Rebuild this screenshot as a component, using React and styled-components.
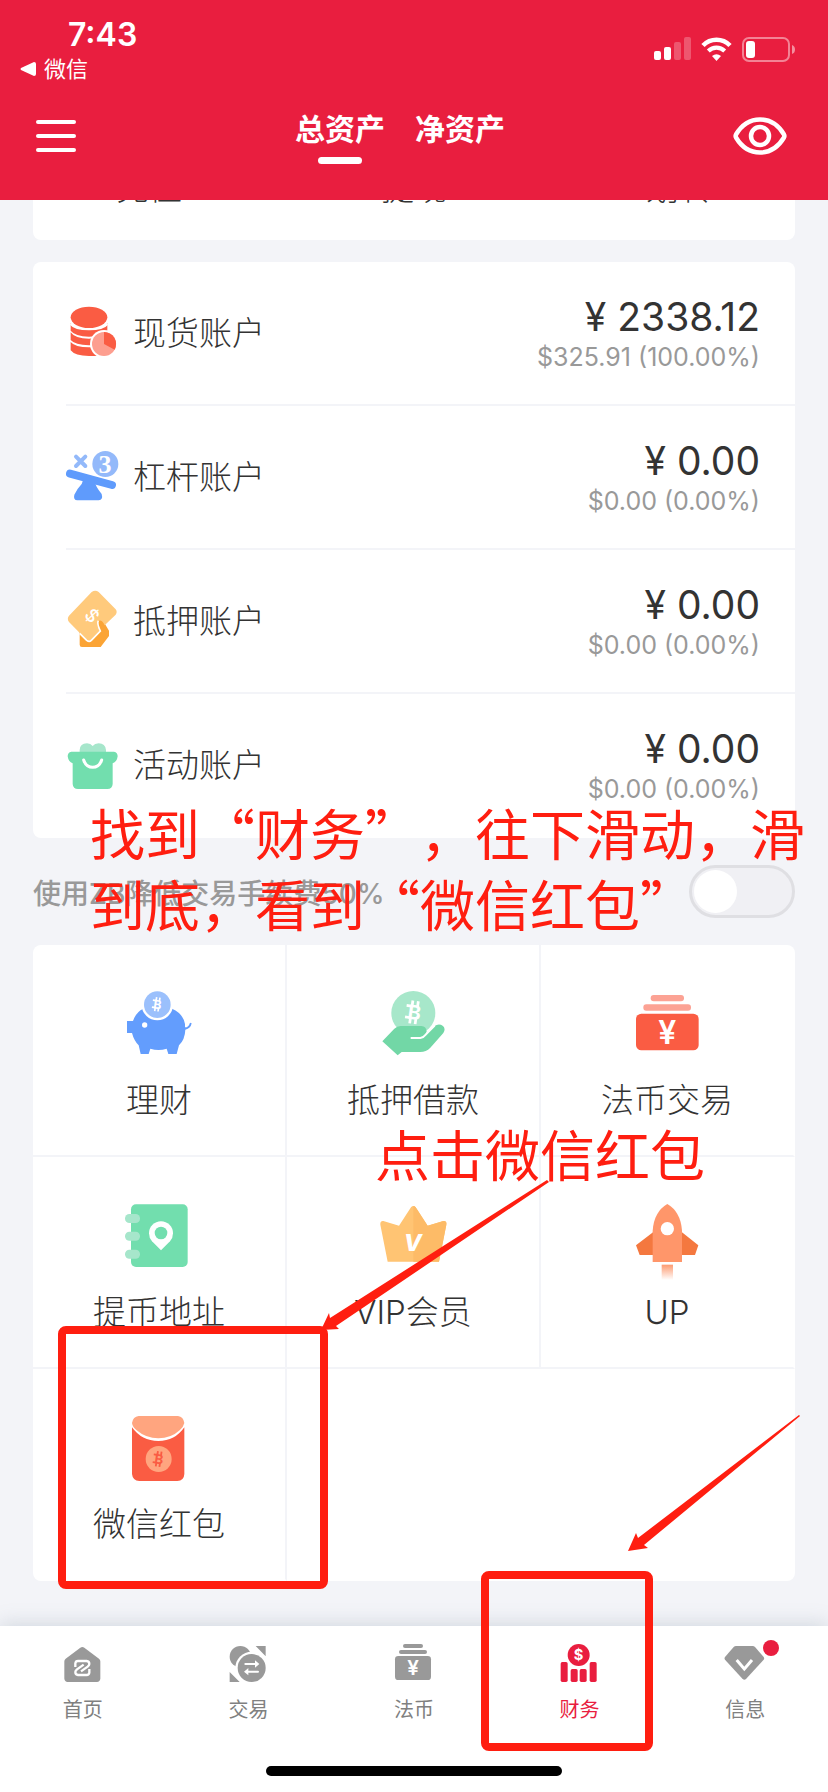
import React, { useState } from "react";
import styled, { createGlobalStyle } from "styled-components";

const brandRed = "#e91e3f";
const markRed = "#ff1e10";
const pageGray = "#f3f4f8";
const lineGray = "#f3f4f8";
const textDark = "#333333";
const textGray = "#999999";

const GlobalStyle = createGlobalStyle`
  * {
    box-sizing: border-box;
  }
  body {
    margin: 0;
    background-color: ${pageGray};
    font-family: Inter, "Noto Sans CJK SC", sans-serif;
    color: ${textDark};
  }
  button {
    border: 0;
    padding: 0;
    background: none;
    color: inherit;
    font: inherit;
    cursor: pointer;
  }
  svg {
    display: block;
    overflow: visible;
  }
`;

const Page = styled.div`
  position: relative;
  overflow: hidden;
`;

/* ---------- header ---------- */

const Header = styled.header`
  background-color: ${brandRed};
  color: white;
`;

const StatusBar = styled.div`
  display: flex;
  justify-content: space-between;
  align-items: center;
  padding: 15px 33px 0 20px;
`;

const Time = styled.div`
  padding-left: 48px;
  font-size: 32px;
  font-weight: 600;
  line-height: 40px;
`;

const BackLink = styled.a`
  display: flex;
  align-items: center;
  gap: 8px;
  color: white;
  font-size: 22px;
  line-height: 28px;
  text-decoration: none;
`;

const StatusIcons = styled.div`
  display: flex;
  align-items: center;
  gap: 10px;
`;

const NavBar = styled.nav`
  display: flex;
  justify-content: space-between;
  align-items: center;
  height: 117px;
  padding: 0 32px 12px 36px;
`;

const MenuButton = styled.button`
  display: flex;
  flex-direction: column;
  gap: 10px;
  width: 40px;
`;

const MenuLine = styled.span`
  width: 100%;
  height: 4px;
  border-radius: 2px;
  background-color: white;
`;

const EyeButton = styled.button`
  display: flex;
  justify-content: center;
  width: 72px;
`;

const TitleTabs = styled.div`
  display: flex;
  gap: 30px;
`;

const TitleTab = styled.button`
  display: flex;
  flex-direction: column;
  align-items: center;
  gap: 6px;
  font-size: 30px;
  font-weight: bold;
  line-height: 44px;
  &::after {
    content: "";
    width: 44px;
    height: 7px;
    border-radius: 4px;
    background-color: ${props => (props.$active ? "white" : "transparent")};
  }
`;

/* ---------- cards ---------- */

const Content = styled.main`
  padding: 0 33px 45px;
`;

const ShortcutCard = styled.section`
  display: flex;
  justify-content: space-between;
  align-items: flex-end;
  height: 40px;
  padding: 0 83px 28px;
  overflow: hidden;
  border-radius: 0 0 8px 8px;
  background-color: white;
`;

const Shortcut = styled.button`
  flex: none;
  font-size: 33px;
  font-weight: 300;
  line-height: 48px;
`;

const AccountCard = styled.section`
  margin-top: 22px;
  padding-left: 33px;
  border-radius: 8px;
  background-color: white;
`;

const AccountRow = styled.div`
  display: flex;
  align-items: center;
  gap: 15px;
  height: 144px;
  padding-right: 35px;
  border-bottom: 2px solid ${lineGray};
  &:last-child {
    border-bottom-color: transparent;
  }
`;

const AccountName = styled.div`
  flex: 1;
  font-size: 33px;
  font-weight: 300;
  line-height: 48px;
`;

const Amounts = styled.div`
  text-align: right;
`;

const Amount = styled.div`
  font-size: 39px;
  line-height: 48px;
`;

const SubAmount = styled.div`
  color: ${textGray};
  font-size: 25px;
  line-height: 32px;
`;

const FeeRow = styled.div`
  display: flex;
  justify-content: space-between;
  align-items: center;
  height: 107px;
`;

const FeeLabel = styled.label`
  color: ${textGray};
  font-size: 28px;
  font-weight: 500;
`;

const Toggle = styled.input`
  appearance: none;
  width: 106px;
  height: 53px;
  margin: 0;
  padding: 2px;
  border: 3px solid #dfdfe3;
  border-radius: 27px;
  background-color: #f0f0f4;
  cursor: pointer;
  &::before {
    content: "";
    display: block;
    width: 43px;
    height: 43px;
    border-radius: 50%;
    background-color: white;
  }
  &:checked {
    background-color: ${brandRed};
  }
  &:checked::before {
    margin-left: auto;
  }
`;

const TileGrid = styled.section`
  display: grid;
  grid-template-columns: repeat(3, 1fr);
  grid-auto-rows: 212px;
  border-radius: 8px;
  background-color: white;
`;

const Tile = styled.button`
  display: flex;
  flex-direction: column;
  align-items: center;
  justify-content: flex-start;
  gap: 16px;
  padding-top: 43px;
  border-right: 2px solid ${lineGray};
  border-bottom: 2px solid ${lineGray};
  font-size: 33px;
  font-weight: 300;
  line-height: 48px;
  &:nth-child(3n) {
    border-right-color: transparent;
  }
  &:last-child {
    border-bottom-color: transparent;
  }
`;

/* ---------- bottom bar ---------- */

const BottomBar = styled.footer`
  position: relative;
  height: 166px;
  background-color: white;
  box-shadow: 0 -2px 18px rgba(110, 130, 150, 0.25);
`;

const BottomTabs = styled.nav`
  display: grid;
  grid-template-columns: repeat(5, 1fr);
  height: 140px;
`;

const BottomTab = styled.a`
  display: flex;
  flex-direction: column;
  align-items: center;
  gap: 13px;
  padding-top: 18px;
  color: ${props => (props.$active ? brandRed : "#808080")};
  font-size: 20px;
  line-height: 26px;
  text-decoration: none;
`;

const TabIcon = styled.span`
  position: relative;
  color: ${props => (props.$active ? brandRed : textGray)};
`;

const Dot = styled.span`
  position: absolute;
  top: -4px;
  right: -14px;
  width: 16px;
  height: 16px;
  border-radius: 50%;
  background-color: ${brandRed};
`;

const HomeIndicator = styled.div`
  width: 296px;
  height: 10px;
  margin: 0 auto;
  border-radius: 5px;
  background-color: black;
`;

/* ---------- tutorial marks drawn over the page ---------- */

const Note = styled.p`
  position: absolute;
  z-index: 2;
  top: ${props => props.$top}px;
  left: ${props => props.$left}px;
  margin: 0;
  color: ${markRed};
  font-family: "Noto Sans CJK SC", sans-serif;
  font-size: 55px;
  line-height: 71px;
  white-space: nowrap;
  text-spacing-trim: space-all;
  pointer-events: none;
`;

const MarkBox = styled.div`
  position: absolute;
  z-index: 2;
  top: ${props => props.$top}px;
  left: ${props => props.$left}px;
  width: ${props => props.$width}px;
  height: ${props => props.$height}px;
  border: 8px solid ${markRed};
  border-radius: 8px;
  pointer-events: none;
`;

const Arrow = styled.svg`
  position: absolute;
  z-index: 2;
  top: ${props => props.$top}px;
  left: ${props => props.$left}px;
  fill: ${markRed};
  pointer-events: none;
`;

/* ---------- icons ---------- */

const Glyph = ({ children, ...rest }) => (
  <text
    textAnchor="middle"
    fontFamily="Inter, 'DejaVu Sans', sans-serif"
    fontWeight="700"
    fill="white"
    {...rest}
  >
    {children}
  </text>
);

// B with the two ticks above and below, centred on x, y
const Bitcoin = ({ x, y, scale = 1, color = "white" }) => (
  <g transform={`translate(${x} ${y}) rotate(8) scale(${scale})`}>
    <Glyph x="1" y="13" fontSize="36" fill={color}>B</Glyph>
    <path
      d="M-5 -21 V-10 M5 -21 V-10 M-5 10 V21 M5 10 V21 M-15 -10.500 H-4 M-15 10.500 H-4"
      stroke={color}
      strokeWidth="5"
    />
  </g>
);

const SignalIcon = () => (
  <svg width="37" height="24" viewBox="0 0 37 24" fill="white">
    <rect x="0" y="14" width="7" height="9" rx="2" />
    <rect x="10" y="10" width="7" height="13" rx="2" />
    <rect x="20" y="5" width="7" height="18" rx="2" opacity="0.25" />
    <rect x="30" y="0" width="7" height="23" rx="2" opacity="0.25" />
  </svg>
);

const WifiIcon = () => (
  <svg width="31" height="24" viewBox="0 0 31 24" fill="none">
    <path d="M2 8.5 C9.500 0.800 21.500 0.800 29 8.500" stroke="white" strokeWidth="4.600" />
    <path d="M7.300 14 C12 9.600 19 9.600 23.700 14" stroke="white" strokeWidth="4.200" />
    <path d="M15.500 24 L11 19 Q15.500 15.500 20 19 Z" fill="white" />
  </svg>
);

const BatteryIcon = () => (
  <svg width="53" height="25" viewBox="0 0 53 25">
    <rect x="1" y="1" width="46" height="23" rx="6" fill="none" stroke="white" strokeWidth="2" opacity="0.45" />
    <rect x="4" y="4" width="9" height="17" rx="3" fill="white" />
    <path d="M50 8 Q53 9 53 12.500 Q53 16 50 17 Z" fill="white" opacity="0.5" />
  </svg>
);

const EyeIcon = () => (
  <svg width="54" height="38" viewBox="0 0 54 38" fill="none" stroke="white" strokeWidth="4.500">
    <path d="M3 17.500 C15 -2.500 39 -2.500 51 17.500 Q51.800 19 51 20.500 C39 40.500 15 40.500 3 20.500 Q2.200 19 3 17.500 Z" />
    <circle cx="27" cy="19" r="9" />
  </svg>
);

const SpotIcon = () => (
  <svg width="52" height="52" viewBox="108 141 156 156">
    <g fill="#fa5c43">
      <ellipse cx="177" cy="172" rx="55" ry="32" />
      <path d="M122 190 Q135 210 177 210 Q219 210 232 190 V212 Q215 229 177 230 Q135 229 122 212 Z" />
      <path d="M122 217 Q135 236 177 236 Q205 236 232 217 V240 Q215 256 177 256 Q135 255 122 240 Z" />
      <path d="M122 246 Q135 262 177 262 H215 V288 H177 Q135 288 122 271 Z" />
    </g>
    <path d="M122 192 Q135 208 177 208 Q219 208 232 192" fill="none" stroke="white" strokeWidth="6" />
    <circle cx="222" cy="252" r="42" fill="white" />
    <circle cx="222" cy="252" r="36" fill="#fd9e8f" />
    <path d="M222 252 V216 A36 36 0 0 1 254 269 Z" fill="#fa5c43" />
  </svg>
);

const LeverIcon = () => (
  <svg width="52" height="52" viewBox="108 573 156 156">
    <path d="M138 590 L166 618 M166 590 L138 618" stroke="#93b9fa" strokeWidth="12" strokeLinecap="round" />
    <circle cx="226" cy="612" r="39" fill="#93b9fa" />
    <Glyph x="225" y="638" fontSize="78" fontFamily="'Liberation Serif', serif">3</Glyph>
    <path d="M120 641 L246 675" stroke="#5f9bfc" strokeWidth="24" strokeLinecap="round" />
    <path d="M163 650 L192 658 Q196 680 215 702 Q220 720 206 721 H142 Q129 720 133 704 Q140 688 155 672 Z" fill="#5f9bfc" />
  </svg>
);

const PledgeIcon = () => (
  <svg width="52" height="52" viewBox="108 135 156 156">
    <path d="M149 240 V284 Q149 291 156 291 H212 L237 258 V242 L220 214 Q208 204 202 216 L205 240 Z" fill="#fba435" />
    <path
      d="M185 126 Q196 118 206 126 L257 178 Q263 186 257 194 L224 226 Q216 206 204 213 Q199 219 211 242 L184 270 Q178 275 170 270 L117 216 Q110 206 117 197 Z"
      fill="#ffca7c"
    />
    <path d="M205 212 Q200 219 211 243 L184 271 Q178 277 170 271 L149 250" fill="none" stroke="white" strokeWidth="5" />
    <Glyph transform="translate(186 197) rotate(48)" y="19" fontSize="54" fontWeight="500">$</Glyph>
  </svg>
);

const GiftIcon = () => (
  <svg width="52" height="52" viewBox="108 567 156 156">
    <path d="M149 612 V600 Q150 580 171 580 Q182 580 188 588 Q194 580 206 580 Q226 580 228 600 V612 Z" fill="#a6e6cb" />
    <path
      d="M124 605 H252 Q263 607 263 619 Q261 635 248 640 V702 Q247 717 232 717 H144 Q129 717 128 702 V640 Q115 635 113 619 Q113 607 124 605 Z"
      fill="#72deae"
    />
    <path d="M161 630 Q168 652 188 652 Q208 652 215 630" fill="none" stroke="white" strokeWidth="9" strokeLinecap="round" />
  </svg>
);

const PiggyIcon = () => (
  <svg width="72" height="72" viewBox="279 144 216 216">
    <path
      d="M291 243 H309 Q318 216 340 206 H426 Q459 220 465 252 V262 Q476 262 480 248 L485 250 Q482 266 466 269 Q465 298 447 316 L440 342 H415 L410 326 Q386 334 361 326 L356 342 H332 L326 316 Q312 302 306 279 H291 Z"
      fill="#639dfd"
    />
    <circle cx="344" cy="255" r="8" fill="white" />
    <circle cx="382" cy="194" r="47" fill="white" />
    <circle cx="382" cy="194" r="40" fill="#9bc0fc" />
    <Bitcoin x={382} y={193} />
  </svg>
);

const LoanIcon = () => (
  <svg width="72" height="72" viewBox="1041 144 216 216">
    <circle cx="1150" cy="219" r="66" fill="#a7e7ca" />
    <Bitcoin x={1152} y={217} scale={1.65} />
    <path
      d="M1057 304 L1093 266 Q1101 258 1112 258 H1174 Q1189 259 1190 275 L1185 283 L1213 259 Q1226 249 1239 258 Q1248 267 1240 279 L1201 323 Q1188 336 1171 336 H1115 L1103 346 Z"
      fill="#72d7a6"
    />
    <path d="M1142 294 H1171 Q1180 293 1188 283 L1214 257" fill="none" stroke="white" strokeWidth="6" />
  </svg>
);

const CashIcon = () => (
  <svg width="72" height="72" viewBox="396 144 216 216">
    <rect x="455" y="165" width="100" height="19" rx="9" fill="#fca294" />
    <rect x="433" y="193" width="143" height="19" rx="9" fill="#fca294" />
    <rect x="411" y="221" width="188" height="110" rx="16" fill="#fa5c43" />
    <Glyph x="505" y="311" fontSize="96" fontWeight="600">¥</Glyph>
  </svg>
);

const AddressIcon = () => (
  <svg width="72" height="72" viewBox="279 60 216 216">
    <rect x="303" y="73" width="170" height="188" rx="15" fill="#72deae" />
    <g fill="#a6e6cb">
      <rect x="285" y="102" width="45" height="27" rx="13" />
      <rect x="285" y="155" width="45" height="27" rx="13" />
      <rect x="285" y="209" width="45" height="27" rx="13" />
    </g>
    <path d="M393 211 L366 184 Q357 174 357 160 A36 36 0 0 1 429 160 Q429 174 420 184 Z" fill="white" />
    <circle cx="393" cy="159" r="19" fill="#72deae" />
  </svg>
);

const CrownIcon = () => (
  <svg width="72" height="72" viewBox="1041 60 216 216">
    <path
      d="M1143 82 Q1150 74 1157 82 L1193 137 L1240 123 Q1251 122 1249 134 L1227 245 H1073 L1051 134 Q1050 122 1060 123 L1107 137 Z"
      fill="#ffc473"
    />
    <path d="M1150 78 Q1154 78 1157 82 L1193 137 L1240 123 Q1251 122 1249 134 L1227 245 H1150 Z" fill="#fdbb67" />
    <Glyph x="1148" y="213" fontSize="70" fontWeight="800" fontStyle="italic">V</Glyph>
  </svg>
);

const RocketIcon = () => (
  <svg width="72" height="72" viewBox="396 780 216 216">
    <defs>
      <linearGradient id="flame" x1="0" y1="0" x2="0" y2="1">
        <stop offset="0" stopColor="#fd9a70" />
        <stop offset="1" stopColor="#fd9a70" stopOpacity="0" />
      </linearGradient>
    </defs>
    <path d="M463 876 L411 916 L422 945 H463 Z M548 876 L598 916 L588 945 H548 Z" fill="#f4783f" />
    <path d="M505 792 Q545 815 549 872 V966 H461 V872 Q465 815 505 792 Z" fill="#ff966a" />
    <circle cx="505" cy="866" r="20" fill="white" />
    <rect x="488" y="974" width="34" height="46" fill="url(#flame)" />
  </svg>
);

const RedPacketIcon = () => (
  <svg width="72" height="72" viewBox="279 156 216 216">
    <path d="M306 202 Q335 243 385 243 Q435 243 463 202 V342 Q462 362 442 363 H328 Q308 362 306 342 Z" fill="#fa5c43" />
    <path d="M326 168 H444 Q460 170 463 189 Q461 200 449 211 Q423 235 385 235 Q348 235 320 211 Q307 200 306 189 Q309 170 326 168 Z" fill="#ffa57f" />
    <circle cx="386" cy="297" r="39" fill="#ffa57f" />
    <Bitcoin x={386} y={297} scale={1.1} color="#fa5c43" />
  </svg>
);

const HomeIcon = () => (
  <svg width="40" height="40" viewBox="188 132 120 120">
    <path d="M240 143 Q246 139 252 143 L296 176 Q300 179 300 184 V236 Q299 245 290 246 H202 Q193 245 192 236 V184 Q192 179 196 176 Z" fill="currentColor" />
    <path
      d="M225 201 V190 Q226 183 233 183 H259 Q267 184 267 192 Q267 196 262 200 L242 214 M267 207 V218 Q266 225 259 225 H233 Q225 224 225 216 Q225 212 230 208 L250 194"
      fill="none"
      stroke="white"
      strokeWidth="7"
    />
  </svg>
);

const TradeIcon = () => (
  <svg width="40" height="40" viewBox="685 132 120 120">
    <g fill="currentColor">
      <circle cx="722" cy="170" r="32" />
      <path d="M768 138 H798 V169 Z M690 216 V246 H720 Z" />
    </g>
    <circle cx="756" cy="204" r="49" fill="white" />
    <circle cx="756" cy="204" r="42" fill="currentColor" />
    <path d="M737 192 H770 M742 215 H775" stroke="white" strokeWidth="6" strokeLinecap="round" />
    <path d="M766 181 L779 192 L766 203 Z M746 204 L733 215 L746 226 Z" fill="white" />
  </svg>
);

const FiatIcon = () => (
  <svg width="40" height="40" viewBox="1182 132 120 120">
    <g fill="currentColor">
      <rect x="1209" y="132" width="60" height="12" rx="6" />
      <rect x="1197" y="150" width="84" height="12" rx="6" />
      <rect x="1185" y="168" width="108" height="72" rx="10" />
    </g>
    <Glyph x="1239" y="226" fontSize="62" fontWeight="600">¥</Glyph>
  </svg>
);

const FinanceIcon = () => (
  <svg width="40" height="40" viewBox="358 252 120 120">
    <g fill="currentColor">
      <circle cx="414" cy="285" r="33" />
      <rect x="360" y="306" width="21" height="60" rx="5" />
      <rect x="390" y="327" width="21" height="39" rx="5" />
      <rect x="417" y="327" width="21" height="39" rx="5" />
      <rect x="447" y="306" width="21" height="60" rx="5" />
    </g>
    <Glyph x="414" y="301" fontSize="44">$</Glyph>
  </svg>
);

const GemIcon = () => (
  <svg width="40" height="40" viewBox="854 252 120 120">
    <path d="M887 258 H937 Q941 258 944 261 L970 291 Q973 295 970 299 L917 357 Q912 361 907 357 L854 299 Q851 295 854 291 L880 261 Q883 258 887 258 Z" fill="currentColor" />
    <path d="M889 300 L912 327 L935 300" fill="none" stroke="white" strokeWidth="9" />
  </svg>
);

const shortcuts = ["充值", "提现", "划转"];

const accounts = [
  { name: "现货账户", amount: "2338.12", sub: "$325.91 (100.00%)", Icon: SpotIcon },
  { name: "杠杆账户", amount: "0.00", sub: "$0.00 (0.00%)", Icon: LeverIcon },
  { name: "抵押账户", amount: "0.00", sub: "$0.00 (0.00%)", Icon: PledgeIcon },
  { name: "活动账户", amount: "0.00", sub: "$0.00 (0.00%)", Icon: GiftIcon }
];

const tiles = [
  { name: "理财", Icon: PiggyIcon },
  { name: "抵押借款", Icon: LoanIcon },
  { name: "法币交易", Icon: CashIcon },
  { name: "提币地址", Icon: AddressIcon },
  { name: "VIP会员", Icon: CrownIcon },
  { name: "UP", Icon: RocketIcon },
  { name: "微信红包", Icon: RedPacketIcon }
];

const bottomTabs = [
  { name: "首页", Icon: HomeIcon },
  { name: "交易", Icon: TradeIcon },
  { name: "法币", Icon: FiatIcon },
  { name: "财务", Icon: FinanceIcon, active: true },
  { name: "信息", Icon: GemIcon, dot: true }
];

const App = () => {
  const [title, setTitle] = useState("总资产");
  const [useZb, setUseZb] = useState(false);

  return (
    <Page>
      <GlobalStyle />
      <Header>
        <StatusBar>
          <div>
            <Time>7:43</Time>
            <BackLink href="#wechat">
              <svg width="16" height="14" viewBox="0 0 16 14" fill="white">
                <path d="M1 6 L14 0 Q16 0 16 2 V12 Q16 14 14 14 L1 8 Q0 7 1 6 Z" />
              </svg>
              微信
            </BackLink>
          </div>
          <StatusIcons>
            <SignalIcon />
            <WifiIcon />
            <BatteryIcon />
          </StatusIcons>
        </StatusBar>
        <NavBar>
          <MenuButton aria-label="菜单">
            <MenuLine />
            <MenuLine />
            <MenuLine />
          </MenuButton>
          <TitleTabs>
            {["总资产", "净资产"].map(name => (
              <TitleTab
                key={name}
                $active={title === name}
                onClick={() => setTitle(name)}
              >
                {name}
              </TitleTab>
            ))}
          </TitleTabs>
          <EyeButton aria-label="显示资产">
            <EyeIcon />
          </EyeButton>
        </NavBar>
      </Header>

      <Content>
        <ShortcutCard>
          {shortcuts.map(name => (
            <Shortcut key={name}>{name}</Shortcut>
          ))}
        </ShortcutCard>

        <AccountCard>
          {accounts.map(({ name, amount, sub, Icon }) => (
            <AccountRow key={name}>
              <Icon />
              <AccountName>{name}</AccountName>
              <Amounts>
                <Amount>¥ {amount}</Amount>
                <SubAmount>{sub}</SubAmount>
              </Amounts>
            </AccountRow>
          ))}
        </AccountCard>

        <FeeRow>
          <FeeLabel htmlFor="use-zb">使用ZB降低交易手续费50%</FeeLabel>
          <Toggle
            id="use-zb"
            type="checkbox"
            checked={useZb}
            onChange={e => setUseZb(e.target.checked)}
          />
        </FeeRow>

        <TileGrid>
          {tiles.map(({ name, Icon }) => (
            <Tile key={name}>
              <Icon />
              {name}
            </Tile>
          ))}
        </TileGrid>
      </Content>

      <BottomBar>
        <BottomTabs>
          {bottomTabs.map(({ name, Icon, active, dot }) => (
            <BottomTab key={name} href="#tab" $active={active}>
              <TabIcon $active={active}>
                <Icon />
                {dot && <Dot />}
              </TabIcon>
              {name}
            </BottomTab>
          ))}
        </BottomTabs>
        <HomeIndicator />
      </BottomBar>

      <Note $top={796} $left={90}>
        找到“财务”，往下滑动，滑
        <br />
        到底，看到“微信红包”
      </Note>
      <Note $top={1117} $left={375}>
        点击微信红包
      </Note>
      <MarkBox $top={1326} $left={58} $width={270} $height={263} />
      <MarkBox $top={1571} $left={481} $width={172} $height={180} />
      <Arrow $top={1180} $left={321} width="228" height="150" viewBox="0 0 228 150">
        <path d="M0 150 L8 133 L9 138 L226 0 L228 2 L15 146 L18 149 Z" />
      </Arrow>
      <Arrow $top={1415} $left={628} width="172" height="136" viewBox="0 0 172 136">
        <path d="M0 136 L8 118 L10 123 L171 0 L172 1 L16 130 L20 133 Z" />
      </Arrow>
    </Page>
  );
};

export default App;
